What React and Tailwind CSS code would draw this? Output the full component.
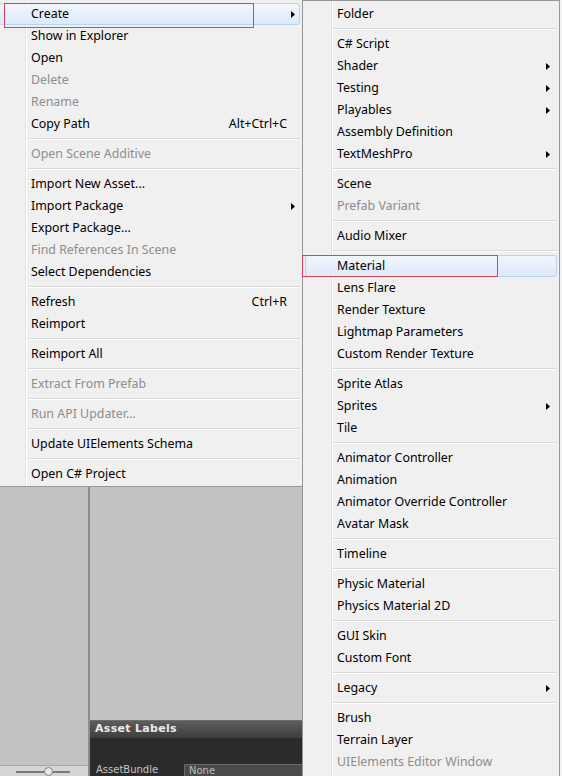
import React from 'react';

const LEFT_MENU = [
  { label: 'Create', arrow: true, active: true },
  { label: 'Show in Explorer' },
  { label: 'Open' },
  { label: 'Delete', disabled: true },
  { label: 'Rename', disabled: true },
  { label: 'Copy Path', shortcut: 'Alt+Ctrl+C' },
  'sep',
  { label: 'Open Scene Additive', disabled: true },
  'sep',
  { label: 'Import New Asset...' },
  { label: 'Import Package', arrow: true },
  { label: 'Export Package...' },
  { label: 'Find References In Scene', disabled: true },
  { label: 'Select Dependencies' },
  'sep',
  { label: 'Refresh', shortcut: 'Ctrl+R' },
  { label: 'Reimport' },
  'sep',
  { label: 'Reimport All' },
  'sep',
  { label: 'Extract From Prefab', disabled: true },
  'sep',
  { label: 'Run API Updater...', disabled: true },
  'sep',
  { label: 'Update UIElements Schema' },
  'sep',
  { label: 'Open C# Project' },
];

const CREATE_MENU = [
  { label: 'Folder' },
  'sep',
  { label: 'C# Script' },
  { label: 'Shader', arrow: true },
  { label: 'Testing', arrow: true },
  { label: 'Playables', arrow: true },
  { label: 'Assembly Definition' },
  { label: 'TextMeshPro', arrow: true },
  'sep',
  { label: 'Scene' },
  { label: 'Prefab Variant', disabled: true },
  'sep',
  { label: 'Audio Mixer' },
  'sep',
  { label: 'Material', active: true },
  { label: 'Lens Flare' },
  { label: 'Render Texture' },
  { label: 'Lightmap Parameters' },
  { label: 'Custom Render Texture' },
  'sep',
  { label: 'Sprite Atlas' },
  { label: 'Sprites', arrow: true },
  { label: 'Tile' },
  'sep',
  { label: 'Animator Controller' },
  { label: 'Animation' },
  { label: 'Animator Override Controller' },
  { label: 'Avatar Mask' },
  'sep',
  { label: 'Timeline' },
  'sep',
  { label: 'Physic Material' },
  { label: 'Physics Material 2D' },
  'sep',
  { label: 'GUI Skin' },
  { label: 'Custom Font' },
  'sep',
  { label: 'Legacy', arrow: true },
  'sep',
  { label: 'Brush' },
  { label: 'Terrain Layer' },
  { label: 'UIElements Editor Window', disabled: true },
];

function Arrow() {
  return (
    <svg width="4" height="7" viewBox="0 0 4 7" className="block">
      <path d="M0 0 L4 3.5 L0 7 Z" fill="#000" />
    </svg>
  );
}

function MenuRow({ item, arrowPad }) {
  return (
    <div className="relative h-[22px] flex items-center pl-[34px]">
      {item.active && (
        <div className="absolute inset-y-0 left-[2px] right-[2px] rounded-[3px] border border-[#b8d2f2] bg-gradient-to-b from-[#f1f6fc] to-[#dde9f8]" />
      )}
      <span className={`relative flex-1 whitespace-nowrap ${item.disabled ? 'text-[#8d8d8d]' : 'text-black'}`}>
        {item.label}
      </span>
      {item.shortcut && (
        <span className="relative whitespace-nowrap text-black pr-px">{item.shortcut}</span>
      )}
      <div className={`relative w-[14px] flex items-center ${arrowPad}`}>
        {item.arrow && <Arrow />}
      </div>
    </div>
  );
}

function Separator() {
  return (
    <div className="h-[8px] pl-[30px] pr-[2px] flex flex-col justify-center">
      <div className="h-px bg-[#d9d9d9]" />
      <div className="h-px bg-white" />
    </div>
  );
}

function Menu({ items, className, arrowPad = 'pl-[3px]' }) {
  return (
    <div
      className={`absolute bg-[#f0f0f0] border border-[#979797] text-[12.4px] leading-none ${className}`}
      style={{ fontFamily: '"Noto Sans", "Open Sans", sans-serif' }}
    >
      <div className="absolute top-0 bottom-0 left-[28px] w-[2px] flex">
        <div className="w-px bg-[#e2e3e3]" />
        <div className="w-px bg-white" />
      </div>
      <div className="relative">
        {items.map((item, i) =>
          item === 'sep' ? <Separator key={i} /> : <MenuRow key={i} item={item} arrowPad={arrowPad} />
        )}
      </div>
    </div>
  );
}

export default function App() {
  return (
    <div className="relative w-[562px] h-[776px] overflow-hidden flex bg-[#f3f3f3]">
      {/* unity editor behind the menus */}
      <div className="w-[302px] h-full flex bg-[#c2c2c2]">
        <div className="w-[88px] flex flex-col">
          <div className="flex-1 bg-[#c2c2c2]" />
          <div className="h-[11px] border-t border-[#a8a8a8] bg-[#d5d5d5] relative">
            <div className="absolute left-[16px] top-[5px] w-[54px] h-[2px] bg-[#7a7a7a]" />
            <div className="absolute left-[44px] top-[1px] w-[9px] h-[9px] rounded-full bg-[#e8e8e8] border border-[#808080]" />
          </div>
        </div>
        <div className="w-[2px] bg-[#8c8c8c]" />
        <div className="flex-1 flex flex-col">
          <div className="flex-1 bg-[#c2c2c2]" />
          <div className="h-[56px] flex flex-col border-t border-[#6e6e6e]">
            <div
              className="h-[17px] flex items-center pl-[5px] bg-gradient-to-b from-[#5d5d5d] to-[#3e3e3e] text-[11px] font-bold text-[#ececec] tracking-[0.3px]"
              style={{ fontFamily: '"DejaVu Sans", sans-serif' }}
            >
              Asset Labels
            </div>
            <div
              className="flex-1 bg-[#2b2b2b] flex flex-col justify-end"
              style={{ fontFamily: '"DejaVu Sans", sans-serif' }}
            >
              <div className="h-[12px] flex items-start">
                <span className="pl-[6px] text-[10px] leading-[12px] text-[#c4c4c4] w-[94px]">AssetBundle</span>
                <div className="flex-1 h-[12px] bg-[#4a4a4a] border-t border-l border-[#6a6a6a] rounded-tl-[2px] pl-[4px] text-[10px] leading-[11px] text-[#bdbdbd]">
                  None
                </div>
              </div>
            </div>
          </div>
        </div>
      </div>

      <Menu items={LEFT_MENU} className="left-[-4px] top-[-1px] w-[307px] pt-[3px] pb-[1px]" />
      <Menu items={CREATE_MENU} arrowPad="pl-[1px]" className="left-[302px] top-0 w-[258px] pt-[2px] h-[778px]" />

      {/* red annotation boxes */}
      <div className="absolute left-[4px] top-[3px] w-[250px] h-[25px] border border-[#df4256]" />
      <div className="absolute left-[302px] top-[255px] w-[196px] h-[22px] border border-[#df4256]" />
    </div>
  );
}
